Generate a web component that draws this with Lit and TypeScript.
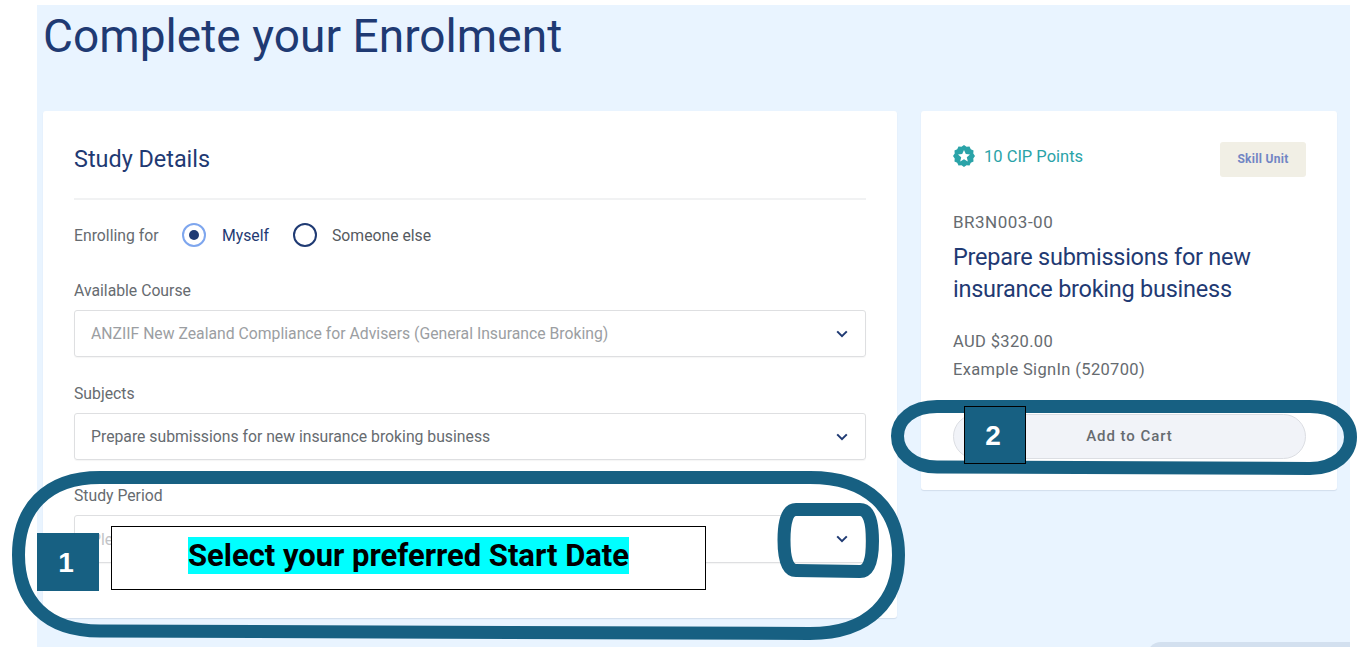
import { LitElement, html, css, svg } from "lit";
import { customElement } from "lit/decorators.js";

const chevron = html`<svg class="chev" width="12" height="8" viewBox="0 0 12 8"><path d="M1.2 1.4 6 6.2l4.8-4.8" fill="none" stroke="#1f3a73" stroke-width="2"/></svg>`;

function badgePath(): string {
  const pts: string[] = [];
  const n = 24;
  for (let i = 0; i < n; i++) {
    const r = i % 2 ? 9.6 : 11;
    const a = (i / n) * Math.PI * 2;
    pts.push(`${(11 + r * Math.sin(a)).toFixed(2)},${(11 - r * Math.cos(a)).toFixed(2)}`);
  }
  return pts.join(" ");
}

@customElement("app-root")
export class AppRoot extends LitElement {
  static styles = css`
    :host { display: block; position: relative; width: 1361px; height: 647px; overflow: hidden; background: #fff; font-family: Roboto, sans-serif; color: #666b70; }
    .panel { margin: 5px 0 0 37px; width: 1313px; height: 642px; background: #e9f4ff; padding-left: 6px; box-sizing: border-box; position: relative; overflow: hidden; }
    h1 { margin: 0; height: 106px; font-family: Roboto, sans-serif; font-weight: 400; font-size: 46px; line-height: 62px; letter-spacing: .05px; color: #1f3a73; }
    .cols { display: flex; align-items: flex-start; gap: 24px; }
    .card { background: #fff; border-radius: 3px; box-shadow: 0 1px 1px rgba(40,60,100,.12); box-sizing: border-box; }
    .main { width: 854px; height: 507px; padding: 31px 31px 0; }
    .side { width: 416px; height: 379px; padding: 31px 31px 0 32px; }
    h2 { margin: 0; border-bottom: 2px solid #f1f2f3; font-size: 23.4px; font-weight: 400; line-height: 35px; color: #1f3a73; box-sizing: border-box; height: 58px; }
    .enrol { display: flex; align-items: center; height: 24px; margin: 23px 0 33px; font-size: 15.75px; }
    .enrol .lead { width: 108px; }
    .radio { width: 24px; height: 24px; border-radius: 50%; box-sizing: border-box; border: 2px solid #1f3a73; margin-right: 16px; display: flex; align-items: center; justify-content: center; }
    .radio.on { border-color: #7ea6ee; }
    .radio.on::after { content: ""; width: 10px; height: 10px; border-radius: 50%; background: #1f3a73; }
    .myself { color: #1f3a73; width: 71px; }
    .other { color: #555a5f; margin-left: -1px; }
    .label { font-size: 15.75px; line-height: 22px; height: 20px; margin-bottom: 10px; }
    .select { height: 47px; border: 1px solid #dedfe1; border-radius: 3px; box-sizing: border-box; display: flex; align-items: center; justify-content: space-between; padding: 0 17px 0 16px; font-size: 15.75px; margin-bottom: 26px; box-shadow: 0 1px 1px rgba(0,0,0,.04); }
    .select.tight { margin-bottom: 25px; }
    .muted { color: #9b9ea2; }
    .ph { color: #c2c4c7; height: 48px; }
    .head { display: flex; justify-content: space-between; align-items: flex-start; height: 66px; margin-bottom: 2px; }
    .cip { display: flex; align-items: center; gap: 9px; color: #2aa3a8; font-size: 16.5px; height: 28px; }
    .tag { width: 86px; height: 35px; background: #f1efe5; border-radius: 3px; color: #7186c4; font-size: 12px; font-weight: 700; display: flex; align-items: center; justify-content: center; letter-spacing: .3px; padding-bottom: 2px; box-sizing: border-box; }
    .code { font-size: 17px; line-height: 24px; letter-spacing: .5px; }
    h3 { margin: 7px 0 0; font-size: 23.5px; font-weight: 400; line-height: 32px; color: #1f3a73; letter-spacing: -.25px; }
    .price { margin-top: 23px; font-size: 16.5px; line-height: 28px; letter-spacing: .35px; }
    .btn { margin-top: 30px; height: 45px; border: 1px solid #dcdee3; border-radius: 23px; background: #f1f3f8; display: flex; align-items: center; justify-content: center; font-size: 15px; font-weight: 500; letter-spacing: .95px; color: #666b70; box-sizing: border-box; padding-bottom: 2px; }
    .corner { position: absolute; left: 1110px; top: 637px; width: 260px; height: 20px; background: #d3e0ef; border-radius: 14px 0 0 0; }
    .marks { position: absolute; left: 0; top: 0; pointer-events: none; }
    .num { position: absolute; width: 62px; background: #176082; color: #fff; font-weight: 700; font-size: 28px; display: flex; align-items: center; justify-content: center; box-sizing: border-box; padding: 2px 4px 0 0; font-family: "Liberation Sans", sans-serif; }
    .n1 { left: 37px; top: 533px; height: 58px; }
    .n2 { left: 964px; top: 406px; height: 58px; border: 1px solid #000; }
    .note { position: absolute; left: 111px; top: 526px; width: 595px; height: 64px; background: #fff; border: 1px solid #000; box-sizing: border-box; display: flex; align-items: center; justify-content: center; padding-bottom: 5px; }
    .note span { background: #00ffff; color: #000; font-weight: 700; font-size: 30.95px; line-height: 37px; }
  `;

  render() {
    return html`
      <div class="panel">
        <h1>Complete your Enrolment</h1>
        <div class="cols">
          <section class="card main">
            <h2>Study Details</h2>
            <div class="enrol">
              <span class="lead">Enrolling for</span>
              <span class="radio on"></span><span class="myself">Myself</span>
              <span class="radio"></span><span class="other">Someone else</span>
            </div>
            <div class="label">Available Course</div>
            <div class="select muted"><span>ANZIIF New Zealand Compliance for Advisers (General Insurance Broking)</span>${chevron}</div>
            <div class="label">Subjects</div>
            <div class="select tight"><span>Prepare submissions for new insurance broking business</span>${chevron}</div>
            <div class="label">Study Period</div>
            <div class="select ph"><span>Please select</span>${chevron}</div>
          </section>
          <aside class="card side">
            <div class="head">
              <div class="cip">
                <svg width="22" height="22" viewBox="0 0 22 22">
                  <polygon points=${badgePath()} fill="#2aa3a8"/>
                  <polygon points="11,5 12.8,9 17,9.4 13.8,12.2 14.8,16.4 11,14.2 7.2,16.4 8.2,12.2 5,9.4 9.2,9" fill="#fff"/>
                </svg>
                <span>10 CIP Points</span>
              </div>
              <div class="tag">Skill Unit</div>
            </div>
            <div class="code">BR3N003-00</div>
            <h3>Prepare submissions for new insurance broking business</h3>
            <div class="price">AUD $320.00<br />Example SignIn (520700)</div>
            <div class="btn">Add to Cart</div>
          </aside>
        </div>
        <div class="corner"></div>
      </div>
      <svg class="marks" width="1361" height="647" viewBox="0 0 1361 647" fill="none" stroke="#176082" stroke-width="13">
        ${svg`<path d="M100 477.5H810C870 477.5 898.5 510 898.5 555C898.5 600 870 633.5 810 633.5L100 631C45 631 18.5 600 18.5 555C18.5 510 45 477.5 100 477.5Z"/>`}
        ${svg`<path d="M796 509.5H860C869 509.5 872.5 522 872.5 541C872.5 560 869 571.5 860 571.5L796 570.5C787 570.5 784 558 784 540C784 522 787 509.5 796 509.5Z"/>`}
        ${svg`<path d="M937 406.5H1310C1335 406.5 1350.5 420 1350.5 437C1350.5 454 1335 468.5 1310 468.5L937 467C912 467 897.5 452 897.5 436C897.5 420 912 406.5 937 406.5Z"/>`}
      </svg>
      <div class="note"><span>Select your preferred Start Date</span></div>
      <div class="num n1">1</div>
      <div class="num n2">2</div>
    `;
  }
}
